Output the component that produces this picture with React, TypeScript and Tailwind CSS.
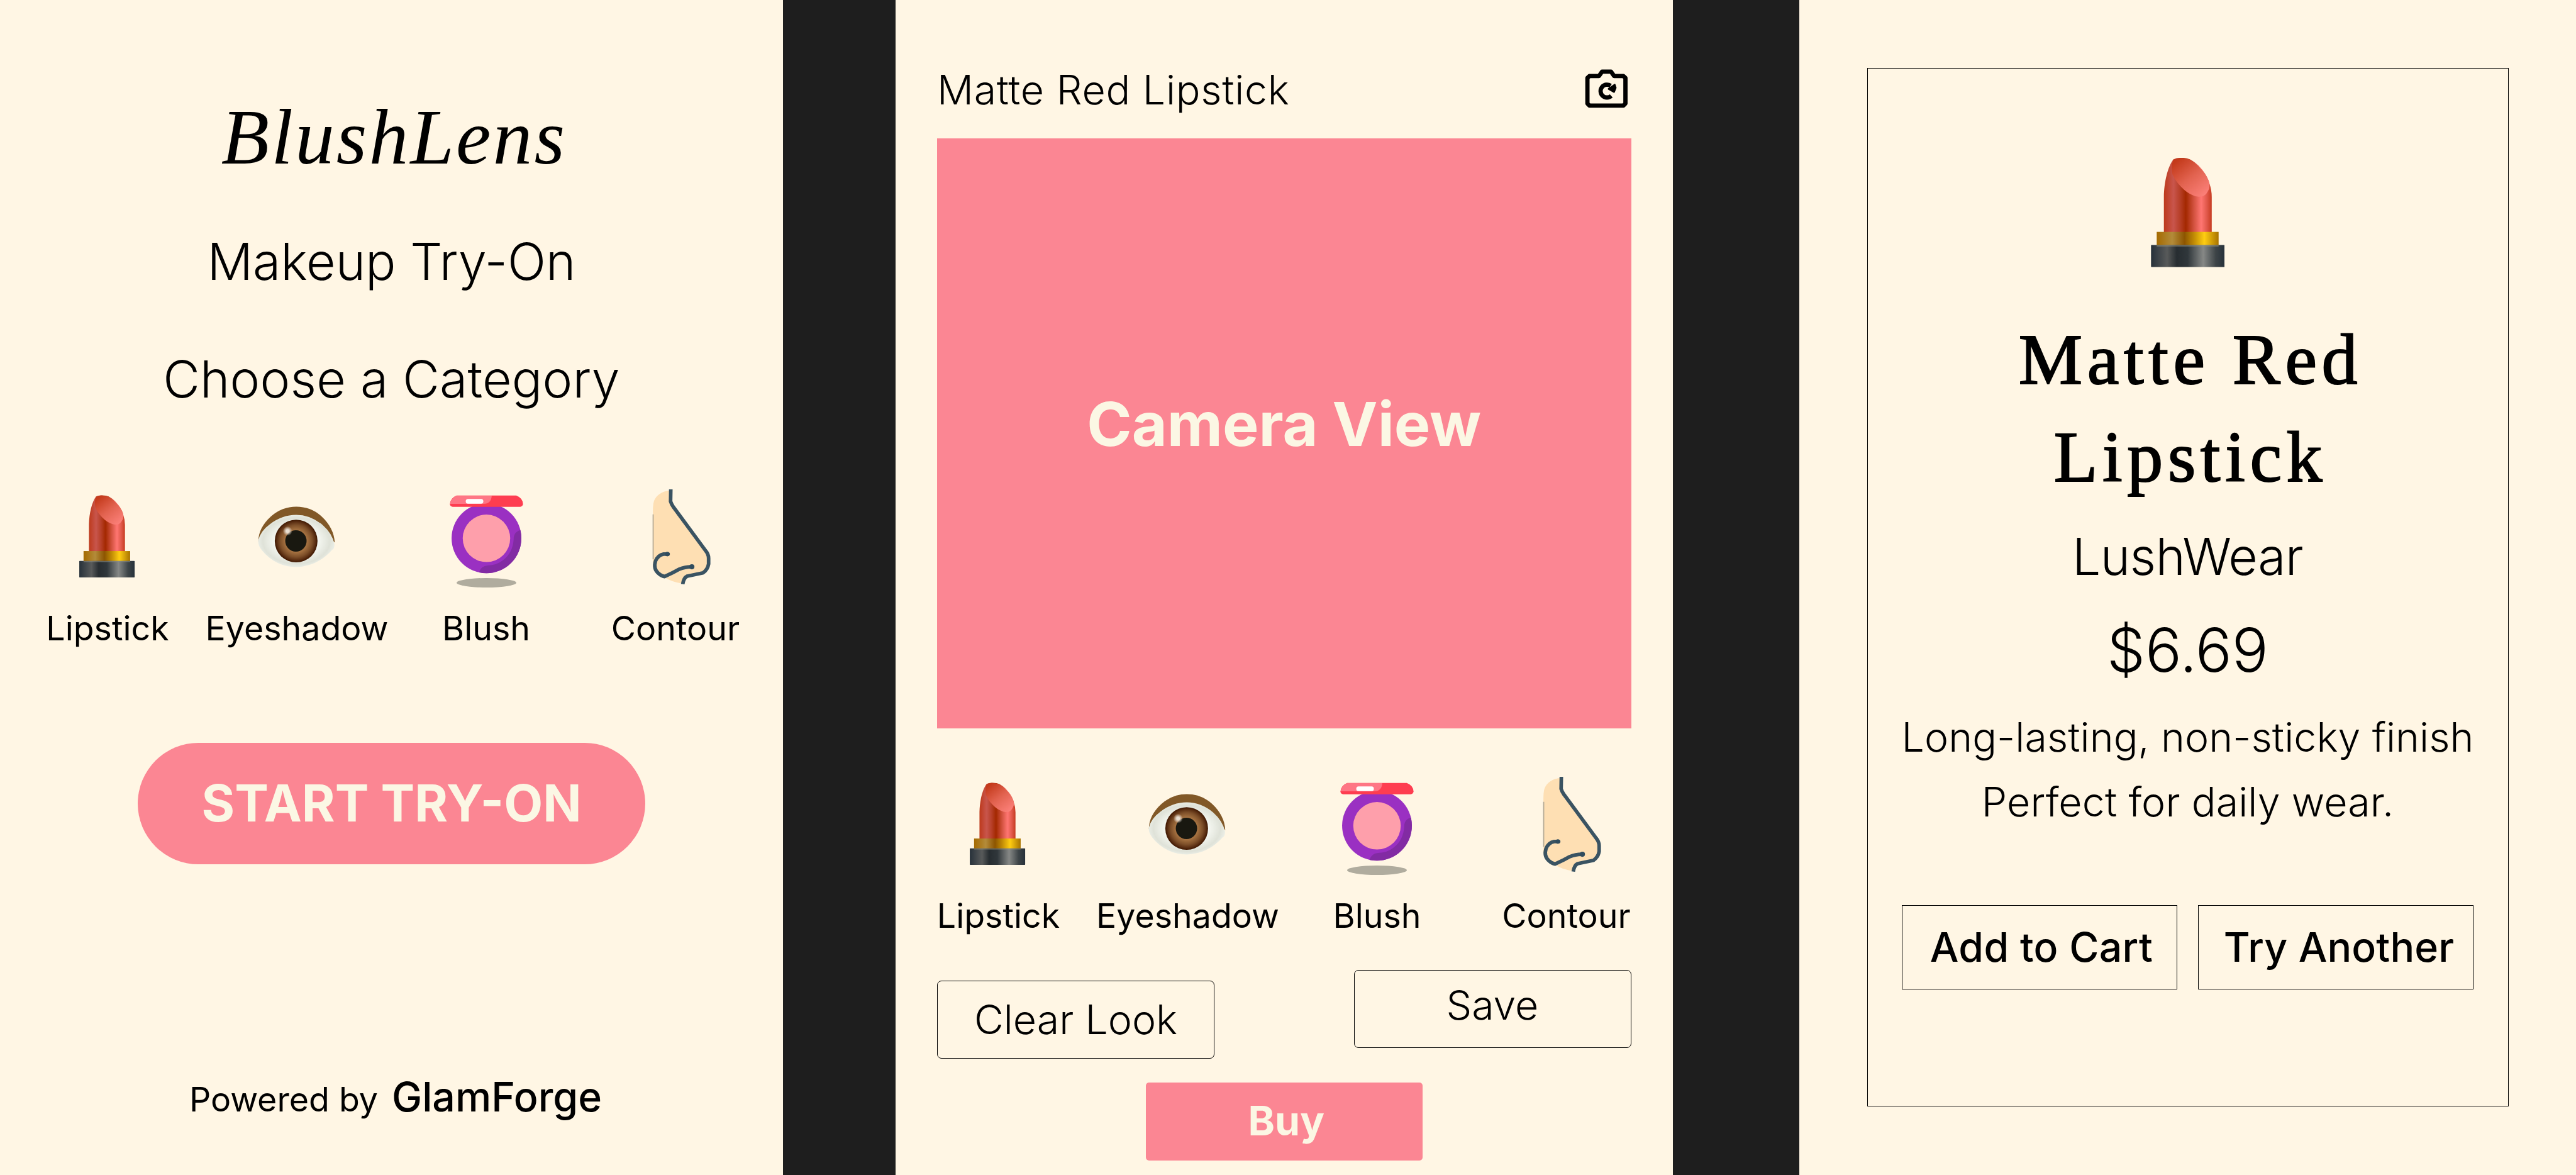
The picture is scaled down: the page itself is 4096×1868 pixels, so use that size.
import type { ReactNode } from "react";

function LipstickArt({ id }: { id: string }) {
  return (
    <g>
      <defs>
        <linearGradient id={`${id}-body`} x1="0" x2="1" y1="0" y2="0">
          <stop offset="0" stopColor="#bd3a1c" />
          <stop offset="0.2" stopColor="#c8554c" />
          <stop offset="0.33" stopColor="#b8402a" />
          <stop offset="0.46" stopColor="#a32800" />
          <stop offset="0.62" stopColor="#d0503c" />
          <stop offset="0.78" stopColor="#ff7672" />
          <stop offset="0.9" stopColor="#e0584a" />
          <stop offset="1" stopColor="#c63a20" />
        </linearGradient>
        <linearGradient id={`${id}-tip`} x1="0.1" x2="0.8" y1="0.1" y2="1">
          <stop offset="0" stopColor="#c43a1b" />
          <stop offset="0.5" stopColor="#e26350" />
          <stop offset="1" stopColor="#fb7f78" />
        </linearGradient>
        <linearGradient id={`${id}-gold`} x1="0" x2="1" y1="0" y2="0">
          <stop offset="0" stopColor="#a56a00" />
          <stop offset="0.25" stopColor="#b38b3a" />
          <stop offset="0.45" stopColor="#8d5500" />
          <stop offset="0.6" stopColor="#c08a05" />
          <stop offset="0.77" stopColor="#ffcd12" />
          <stop offset="1" stopColor="#a87300" />
        </linearGradient>
        <linearGradient id={`${id}-base`} x1="0" x2="1" y1="0" y2="0">
          <stop offset="0" stopColor="#27313a" />
          <stop offset="0.22" stopColor="#585a5a" />
          <stop offset="0.35" stopColor="#272d31" />
          <stop offset="0.5" stopColor="#30373b" />
          <stop offset="0.71" stopColor="#868886" />
          <stop offset="0.88" stopColor="#3d4447" />
          <stop offset="1" stopColor="#27313a" />
        </linearGradient>
      </defs>
      <path
        d="M86 500V259C88 160 112 60 149 10Q168 0 192 0Q235 -2 261 10Q295 28 318 52Q345 80 360 104Q386 145 391 173Q406 215 406 262V500Z"
        fill={`url(#${id}-body)`}
      />
      <path
        d="M149 12Q170 2 192 1Q235 0 261 12Q318 50 360 105Q386 145 391 175Q394 205 381 222Q360 262 328 259Q300 262 276 248Q240 235 202 195Q160 150 143 109Q132 50 149 12Z"
        fill={`url(#${id}-tip)`}
      />
      <rect x="38" y="495" width="414" height="92" fill={`url(#${id}-gold)`} />
      <rect x="0" y="583" width="492" height="147" rx="4" fill={`url(#${id}-base)`} />
      <rect x="38" y="583" width="414" height="10" fill="#8f8f80" opacity="0.6" />
    </g>
  );
}

function LipstickIcon({ id }: { id: string }) {
  return (
    <svg viewBox="0 0 900 900" className="size-[161px]">
      <g transform="translate(196 81)">
        <LipstickArt id={id} />
      </g>
    </svg>
  );
}

function EyeIcon({ id }: { id: string }) {
  return (
    <svg viewBox="0 0 900 900" className="size-[161px]">
      <defs>
        <radialGradient id={`${id}-iris`}>
          <stop offset="0.5" stopColor="#a87442" />
          <stop offset="0.75" stopColor="#7d4f29" />
          <stop offset="0.9" stopColor="#5a2e12" />
          <stop offset="1" stopColor="#3d1600" />
        </radialGradient>
        <radialGradient id={`${id}-white`} cx="0.5" cy="0.5" r="0.55">
          <stop offset="0.5" stopColor="#f6f8f2" />
          <stop offset="0.8" stopColor="#dfe2d8" />
          <stop offset="1" stopColor="#f2f6f0" />
        </radialGradient>
        <radialGradient id={`${id}-shine`}>
          <stop offset="0.3" stopColor="#e9dfd3" />
          <stop offset="1" stopColor="#e9dfd3" stopOpacity="0" />
        </radialGradient>
      </defs>
      <g transform="translate(27 60)">
        <path d="M78 430Q78 310 190 208Q290 122 415 122Q545 122 640 208Q750 310 757 440L600 300H200Z" fill="#815827" />
        <path
          d="M78 420Q95 340 180 278Q290 195 415 195Q540 195 650 285Q735 360 755 455Q755 495 735 505Q600 655 415 658Q230 655 110 510Q70 460 78 420Z"
          fill={`url(#${id}-white)`}
        />
        <circle cx="414" cy="427" r="190" fill={`url(#${id}-iris)`} />
        <circle cx="412" cy="426" r="95" fill="#191810" />
        <circle cx="338" cy="338" r="42" fill={`url(#${id}-shine)`} />
      </g>
    </svg>
  );
}

function BlushIcon({ id }: { id: string }) {
  return (
    <svg viewBox="0 0 900 900" className="size-[161px]">
      <defs>
        <clipPath id={`${id}-disc`}>
          <circle cx="450" cy="433" r="310" />
        </clipPath>
      </defs>
      <g transform="translate(0 30)">
        <ellipse cx="450" cy="828" rx="266" ry="42" fill="#b0ac9e" />
        <circle cx="450" cy="433" r="310" fill="#9a30c2" />
        <path
          d="M770 355Q690 370 692 440Q685 560 600 625Q545 670 460 675Q390 680 380 760L560 800L790 600Z"
          fill="#822ba3"
          clipPath={`url(#${id}-disc)`}
        />
        <circle cx="450" cy="433" r="211" fill="#fe9fab" />
        <path d="M185 52H715Q775 75 775 130Q770 152 750 153H150Q128 152 125 130Q128 75 185 52Z" fill="#fe3d50" />
        <path d="M185 54H497Q492 127 425 127H128Q130 75 185 54Z" fill="#fe7685" />
        <rect x="266" y="83" width="156" height="42" rx="20" fill="#ffffff" />
      </g>
    </svg>
  );
}

function ContourIcon() {
  return (
    <svg viewBox="0 0 900 900" className="size-[161px]">
      <g transform="translate(52 0)">
        <path
          d="M345 38Q240 50 205 130Q192 170 195 260V700Q205 770 300 810Q350 845 455 865L470 810L640 770Q690 720 690 630L350 140Z"
          fill="#fedfb3"
        />
        <path d="M197 250V650" stroke="#b5aa95" strokeWidth="10" fill="none" />
        <g fill="none" stroke="#3a5362" strokeWidth="32" strokeLinejoin="round">
          <path d="M354 28L352 135Q360 160 374 180L665 575Q690 605 690 640V690Q682 740 640 770Q600 778 500 799Q468 815 460 870" />
          <path d="M330 603H290Q240 612 218 665Q196 735 245 775Q270 798 298 803Q370 772 430 737Q480 716 535 716" strokeLinecap="round" />
        </g>
        <circle cx="323" cy="603" r="20" fill="#304c5e" />
        <circle cx="541" cy="716" r="23" fill="#304c5e" />
      </g>
    </svg>
  );
}

function CameraSwitchIcon() {
  return (
    <svg viewBox="0 0 450 450" className="size-[80.5px]" fill="none" stroke="#000000" strokeWidth="38">
      <path d="M80 105H165L193 66H271L299 105H382L400 123V350L382 368H80L62 350V123Z" strokeLinejoin="round" />
      <path d="M274 282A57 57 0 1 1 268 192" />
      <path d="M305 182L314 210L299 248L250 220Z" fill="#000000" strokeWidth="14" strokeLinejoin="round" />
    </svg>
  );
}

function Category({ label, children }: { label: string; children: ReactNode }) {
  return (
    <div className="flex flex-col items-center gap-8">
      {children}
      <span className="text-[53.7px] leading-[65px] whitespace-nowrap">{label}</span>
    </div>
  );
}

function Categories({ id }: { id: string }) {
  return (
    <div className="grid w-[1204px] shrink-0 grid-cols-4">
      <Category label="Lipstick">
        <LipstickIcon id={`${id}-lipstick`} />
      </Category>
      <Category label="Eyeshadow">
        <EyeIcon id={`${id}-eye`} />
      </Category>
      <Category label="Blush">
        <BlushIcon id={`${id}-blush`} />
      </Category>
      <Category label="Contour">
        <ContourIcon />
      </Category>
    </div>
  );
}

function HomeScreen() {
  return (
    <section className="flex w-[1245px] shrink-0 flex-col items-center bg-[#fff6e4] pt-[158px]">
      <h1 className="pl-[8px] font-['Liberation_Serif',serif] text-[125px] leading-[120px] tracking-[3.2px] italic">
        BlushLens
      </h1>
      <h2 className="mt-[88.5px] text-[80.5px] leading-[98px] font-light">Makeup Try-On</h2>
      <h2 className="mt-[89px] text-[80.5px] leading-[98px] font-light tracking-[0.2px]">Choose a Category</h2>
      <div className="mt-[121px]">
        <Categories id="home" />
      </div>
      <button className="mt-[150px] flex h-[193px] w-[807px] items-center justify-center rounded-full bg-[#fb8693] text-[80.5px] font-bold text-[#fbf7e4]">
        START TRY-ON
      </button>
      <p className="mt-[331px] flex items-baseline gap-[22px] pl-[13px] text-[53.7px] leading-[78px]">
        Powered by <span className="text-[64.4px] font-medium">GlamForge</span>
      </p>
    </section>
  );
}

function CameraScreen() {
  return (
    <section className="flex w-[1235.5px] shrink-0 flex-col bg-[#fff6e4] px-[66px] pt-[102px]">
      <header className="flex h-[80.5px] items-start justify-between">
        <h2 className="mt-[2px] text-[64.4px] leading-[78px] font-light tracking-[0.75px]">Matte Red Lipstick</h2>
        <CameraSwitchIcon />
      </header>
      <div className="mt-[37px] flex h-[938px] shrink-0 items-center justify-center bg-[#fb8693] pb-[28px] text-[96.6px] font-bold text-[#fbf7e4]">
        Camera View
      </div>
      <div className="mt-[72px] -ml-[53px]">
        <Categories id="camera" />
      </div>
      <div className="mt-[54.5px] flex items-start justify-between text-[64.4px] font-light">
        <button className="mt-[17px] flex h-[124px] w-[441px] items-center justify-center rounded-[7px] border border-black">
          Clear Look
        </button>
        <button className="flex h-[124px] w-[441px] items-center justify-center rounded-[7px] border border-black pb-3">
          Save
        </button>
      </div>
      <button className="mt-[37.5px] flex h-[124px] w-[440px] items-center justify-center self-center rounded-[5px] bg-[#fb8693] pl-[7px] text-[64.4px] font-bold text-[#fbf7e4]">
        Buy
      </button>
    </section>
  );
}

function ProductScreen() {
  return (
    <section className="flex-1 bg-[#fff6e4] pt-[108px] pl-[108px]">
      <article className="flex h-[1651px] w-[1020px] flex-col items-center border border-black pt-[142px] text-center">
        <svg viewBox="0 0 492 732" className="h-[174px] w-[117.5px] shrink-0">
          <LipstickArt id="product" />
        </svg>
        <h2 className="mt-[69px] w-[700px] pl-[9px] font-['Liberation_Serif',serif] text-[114px] leading-[155px] tracking-[7.6px] [-webkit-text-stroke:2px_black]">
          Matte Red Lipstick
        </h2>
        <p className="mt-[32px] text-[80.5px] leading-[98px] font-light tracking-[-0.6px]">LushWear</p>
        <p className="mt-[40px] text-[96.6px] leading-[117px] font-light">$6.69</p>
        <p className="mt-[30px] text-[64.4px] leading-[102.7px] font-light tracking-[0.1px] whitespace-nowrap">
          Long-lasting, non-sticky finish
          <br />
          Perfect for daily wear.
        </p>
        <div className="mt-[113px] flex gap-[33px] text-[64.4px] font-medium whitespace-nowrap">
          <button className="flex h-[134px] w-[438px] items-center justify-center border border-black pl-[6px] tracking-[0.3px]">
            Add to Cart
          </button>
          <button className="flex h-[134px] w-[438px] items-center justify-center border border-black pl-[10px] tracking-[0.1px]">
            Try Another
          </button>
        </div>
      </article>
    </section>
  );
}

export default function App() {
  return (
    <main className="flex h-[1868px] w-[4096px] overflow-hidden bg-[#1e1e1e] font-['Inter',sans-serif] text-black">
      <HomeScreen />
      <div className="w-[179px] shrink-0" />
      <CameraScreen />
      <div className="w-[201px] shrink-0" />
      <ProductScreen />
    </main>
  );
}
